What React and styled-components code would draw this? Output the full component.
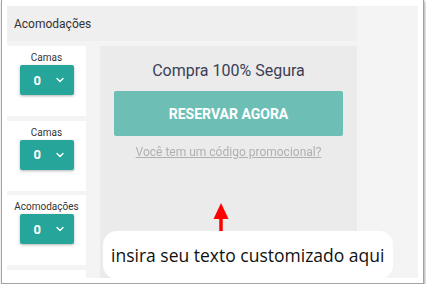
import React from 'react';
import styled, { createGlobalStyle } from 'styled-components';

const GlobalStyle = createGlobalStyle`
    body{
        margin: 0;
        background: #fff;
        font-family: Roboto, "Liberation Sans", sans-serif;
    }
`

const rooms = [
    { label: 'Camas', value: 0 },
    { label: 'Camas', value: 0 },
    { label: 'Acomodações', value: 0 },
]

function Chevron() {
    return (
        <svg width="8" height="6" viewBox="0 0 8 6">
            <polyline points="1,1.5 4,4.5 7,1.5" fill="none" stroke="#fff" strokeWidth="1.4" strokeLinecap="round" strokeLinejoin="round"/>
        </svg>
    )
}

function App() {
    return (
        <>
            <GlobalStyle/>
            <Window>
                <Canvas>
                    <Header>Acomodações</Header>
                    <Sidebar>
                        {rooms.map((room, index) => (
                            <Card key={index}>
                                <Label>{room.label}</Label>
                                <Select>
                                    <span>{room.value}</span>
                                    <Chevron/>
                                </Select>
                            </Card>
                        ))}
                        <Card/>
                    </Sidebar>
                    <Panel>
                        <Title>Compra 100% Segura</Title>
                        <BookButton>RESERVAR AGORA</BookButton>
                        <Promo href="#">Você tem um código promocional?</Promo>
                        <Arrow width="18" height="40" viewBox="0 0 18 40">
                            <polygon points="9,0 1.5,16 16.5,16" fill="#f00"/>
                            <line x1="9" y1="14" x2="9" y2="37" stroke="#f00" strokeWidth="3.5" strokeLinecap="round"/>
                        </Arrow>
                        <Bubble>insira seu texto customizado aqui</Bubble>
                    </Panel>
                </Canvas>
            </Window>
        </>
    )
}

export default App

const Window = styled.div`
    box-sizing: border-box;
    width: 423px;
    height: 285px;
    margin: -1px 0 0 1px;
    border: 1px solid #a3a3a3;
    box-shadow: 1px 2px 3px rgba(0,0,0,0.35);
    background: #fff;
    padding: 6px 5px 4px 5px;
`
const Canvas = styled.div`
    height: 272px;
    background: #f4f4f4;
    display: grid;
    grid-template-columns: 79px 257px;
    grid-template-rows: 35px 1fr;
    column-gap: 14px;
    row-gap: 5px;
    overflow: hidden;
`
const Header = styled.div`
    grid-column: 1 / 3;
    background: #efefef;
    display: flex;
    align-items: center;
    padding-left: 7px;
    font-size: 12px;
    color: #333;
`
const Sidebar = styled.div`
    display: flex;
    flex-direction: column;
    gap: 4.6px;
`
const Card = styled.div`
    flex: 0 0 70px;
    background: #fff;
    display: flex;
    flex-direction: column;
    align-items: center;
    padding-top: 5px;
    box-sizing: border-box;
`
const Label = styled.div`
    font-size: 10px;
    line-height: 14px;
    color: #333;
`
const Select = styled.div`
    width: 54px;
    height: 30px;
    background: #26a69a;
    border-radius: 2px;
    box-shadow: 0 1px 3px rgba(0,0,0,0.3);
    display: flex;
    align-items: center;
    justify-content: space-between;
    padding: 0 10px 0 14px;
    box-sizing: border-box;
    span{
        color: #fff;
        font-weight: 700;
        font-size: 13px;
    }
`
const Panel = styled.div`
    position: relative;
    background: #ebebeb;
    display: flex;
    flex-direction: column;
    align-items: center;
    padding-top: 15px;
`
const Title = styled.div`
    font-size: 16px;
    line-height: 20px;
    color: #3b4055;
`
const BookButton = styled.div`
    margin-top: 10px;
    width: 229px;
    height: 45px;
    background: #6dbfb6;
    border-radius: 2px;
    display: flex;
    align-items: center;
    justify-content: center;
    color: #fff;
    font-weight: 700;
    font-size: 14px;
`
const Promo = styled.a`
    margin-top: 9px;
    font-size: 12px;
    color: #b0b0b0;
    text-decoration: underline;
    filter: blur(0.7px);
`
const Arrow = styled.svg`
    position: absolute;
    left: 112px;
    top: 157px;
`
const Bubble = styled.div`
    position: absolute;
    left: 3px;
    top: 185px;
    width: 290px;
    height: 48px;
    box-sizing: border-box;
    background: #fff;
    border-radius: 14px;
    padding-left: 8px;
    display: flex;
    align-items: center;
    font-family: "Open Sans", "Noto Sans", sans-serif;
    font-size: 17.5px;
    color: #111;
`
